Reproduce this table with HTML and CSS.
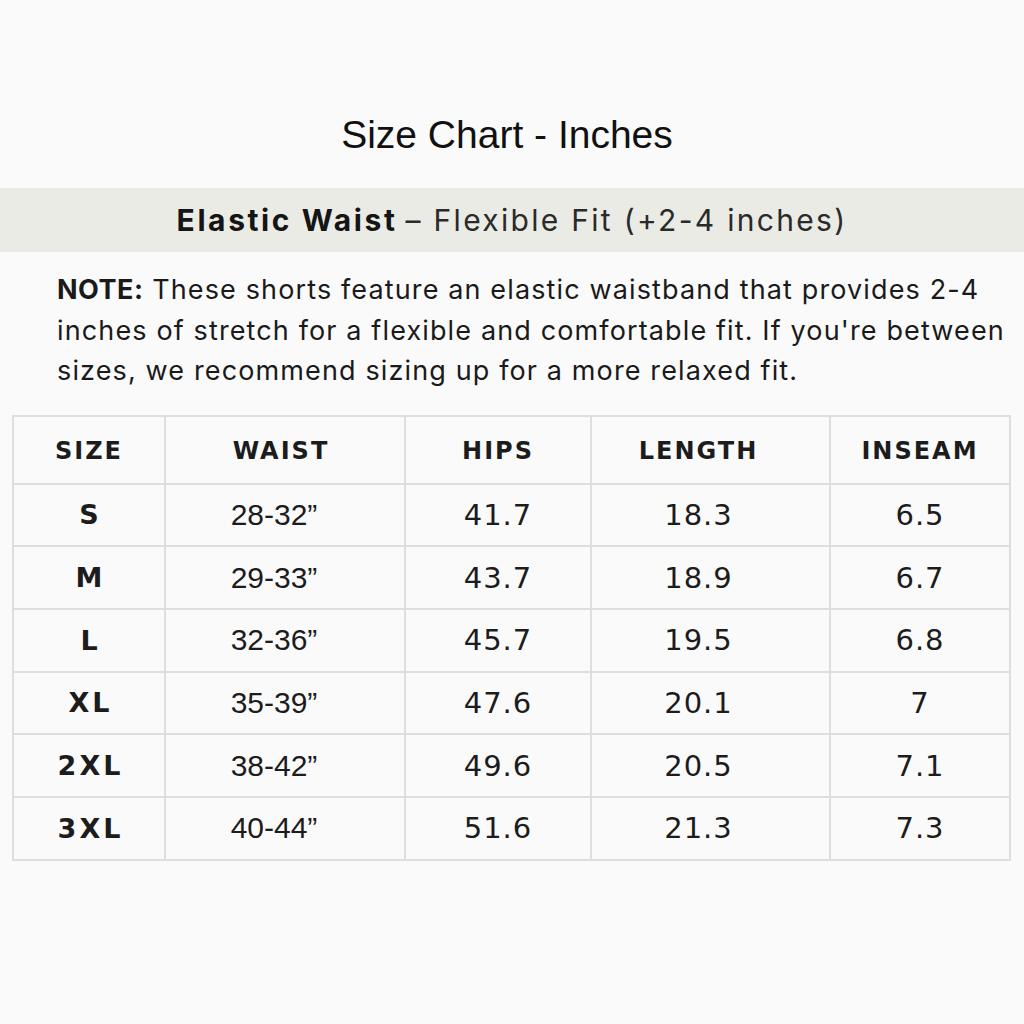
FILE: index.html
```html
<!DOCTYPE html>
<html>
<head>
<meta charset="utf-8">
<link rel="stylesheet" href="styles.css">
</head>
<body>
<div class="page">
  <h1 class="title">Size Chart - Inches</h1>
  <div class="band"><b>Elastic Waist</b> – Flexible Fit (+2-4 inches)</div>
  <p class="note"><b>NOTE:</b> These shorts feature an elastic waistband that provides 2-4<br>inches of stretch for a flexible and comfortable fit. If you're between<br>sizes, we recommend sizing up for a more relaxed fit.</p>
  <table class="chart">
    <colgroup>
      <col class="c1"><col class="c2"><col class="c3"><col class="c4"><col class="c5">
    </colgroup>
    <thead>
      <tr><th>SIZE</th><th class="w">WAIST</th><th>HIPS</th><th class="len">LENGTH</th><th>INSEAM</th></tr>
    </thead>
    <tbody>
      <tr><td class="sz">S</td><td class="w">28-32”</td><td>41.7</td><td class="len">18.3</td><td>6.5</td></tr>
      <tr><td class="sz">M</td><td class="w">29-33”</td><td>43.7</td><td class="len">18.9</td><td>6.7</td></tr>
      <tr><td class="sz">L</td><td class="w">32-36”</td><td>45.7</td><td class="len">19.5</td><td>6.8</td></tr>
      <tr><td class="sz">XL</td><td class="w">35-39”</td><td>47.6</td><td class="len">20.1</td><td>7</td></tr>
      <tr><td class="sz">2XL</td><td class="w">38-42”</td><td>49.6</td><td class="len">20.5</td><td>7.1</td></tr>
      <tr><td class="sz">3XL</td><td class="w">40-44”</td><td>51.6</td><td class="len">21.3</td><td>7.3</td></tr>
    </tbody>
  </table>
</div>
</body>
</html>
```

FILE: styles.css
```css
html, body {
  margin: 0;
  padding: 0;
  background: #fbfafa;
}
.page {
  width: 1024px;
  height: 1024px;
  padding-top: 112px;
  box-sizing: border-box;
  color: #161616;
}
.title {
  margin: 0;
  font-family: "Liberation Sans", Arial, sans-serif;
  font-weight: normal;
  font-size: 39px;
  line-height: 46px;
  text-align: center;
  padding-right: 10px;
  color: #111;
}
.band {
  margin-top: 30px;
  height: 64px;
  background: #ebebe6;
  display: flex;
  align-items: center;
  justify-content: center;
  font-family: "Inter", sans-serif;
  font-size: 30px;
  letter-spacing: 2.3px;
  color: #2a2a2a;
}
.band b {
  color: #151515;
  font-weight: 700;
  letter-spacing: 2.6px;
  margin-right: 8px;
}
.note {
  margin: 18px 0 0 57px;
  font-family: "Inter", sans-serif;
  font-size: 27px;
  letter-spacing: 1.13px;
  line-height: 40.5px;
  color: #1a1a1a;
}
.note b {
  font-weight: 700;
  letter-spacing: 0.5px;
}
.chart {
  margin: 23px 0 0 12px;
  border-collapse: collapse;
  table-layout: fixed;
  width: 997px;
}
.c1 { width: 152px; }
.c2 { width: 240px; }
.c3 { width: 186px; }
.c4 { width: 239px; }
.c5 { width: 180px; }
.chart th, .chart td {
  border: 2px solid #dedede;
  text-align: center;
  padding: 0;
  color: #1c1c1c;
}
.chart thead tr { height: 68px; }
.chart tbody tr { height: 62.7px; }
.chart th {
  font-family: "DejaVu Sans", sans-serif;
  font-weight: bold;
  font-size: 24px;
  letter-spacing: 2px;
  padding-top: 3px;
}
.chart td {
  font-family: "DejaVu Sans", sans-serif;
  font-size: 29px;
  letter-spacing: 1px;
}
.chart td.sz {
  font-weight: bold;
  font-size: 27px;
  letter-spacing: 3px;
  padding-left: 3px;
}
.chart th.w { padding-right: 8px; }
.chart td.w {
  font-family: "Liberation Sans", Arial, sans-serif;
  font-size: 30px;
  letter-spacing: 0;
  padding-right: 22px;
}
.chart .len { padding-right: 24px; }
```
